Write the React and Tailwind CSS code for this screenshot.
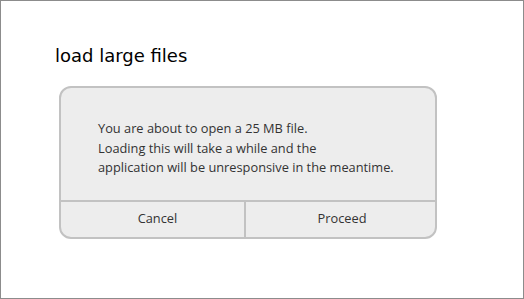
import React from 'react';

export default function App() {
  return (
    <div className="w-[524px] h-[299px] bg-white border border-[#8c8c8c] relative overflow-hidden">
      <div className="pl-[54px] pt-[43px]">
        <h1 className="text-[18px] leading-[24px] text-black font-['DejaVu_Sans',sans-serif]">
          load large files
        </h1>

        {/* dialog */}
        <div className="mt-[18px] ml-[4px] w-[378px] bg-[#ededed] border-2 border-[#c2c2c2] rounded-[12px] font-['Open_Sans','Noto_Sans',sans-serif] text-[#333333]">
          <div className="pl-[37px] pt-[31px] pb-[22px] text-[12.8px] leading-[19.5px]">
            <p>You are about to open a 25 MB file.</p>
            <p>Loading this will take a while and the</p>
            <p>application will be unresponsive in the meantime.</p>
          </div>
          <div className="flex border-t-2 border-[#c2c2c2] h-[37px] text-[12.8px]">
            <div className="w-[185px] pl-[10px] flex items-center justify-center border-r-2 border-[#c2c2c2]">
              Cancel
            </div>
            <div className="flex-1 pl-[3px] flex items-center justify-center">
              Proceed
            </div>
          </div>
        </div>
      </div>
    </div>
  );
}
